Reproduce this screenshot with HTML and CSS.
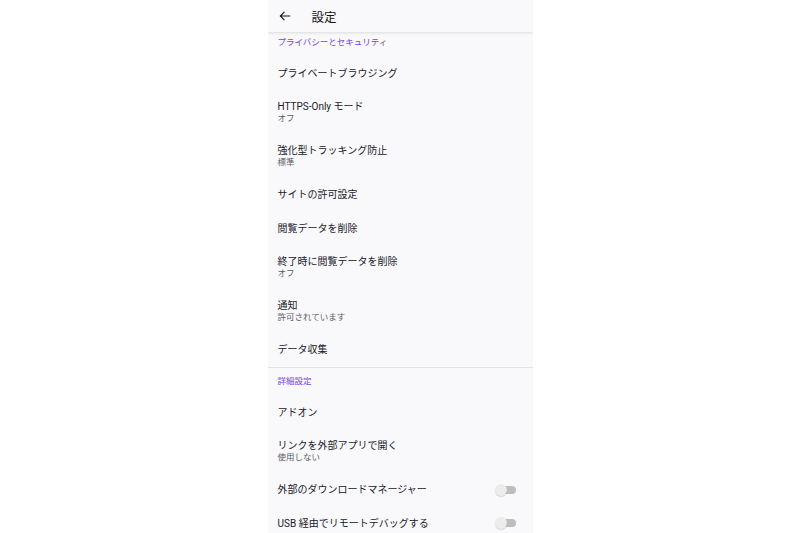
FILE: index.html
```html
<!DOCTYPE html>
<html lang="ja">
<head>
    <meta charset="UTF-8">
    <title>設定</title>
    <link rel="stylesheet" href="styles.css">
</head>
<body>
    <div class="phone">
        <div class="toolbar">
            <svg class="back" width="14" height="14" viewBox="0 0 24 24">
                <path d="M21 12H4M11 5l-7 7 7 7" fill="none" stroke="#15141a" stroke-width="2"/>
            </svg>
            <span class="toolbar-title">設定</span>
        </div>

        <div class="category first">プライバシーとセキュリティ</div>
        <div class="pref">
            <div class="pref-title">プライベートブラウジング</div>
        </div>
        <div class="pref two">
            <div class="pref-title">HTTPS-Only モード</div>
            <div class="pref-summary">オフ</div>
        </div>
        <div class="pref two">
            <div class="pref-title">強化型トラッキング防止</div>
            <div class="pref-summary">標準</div>
        </div>
        <div class="pref">
            <div class="pref-title">サイトの許可設定</div>
        </div>
        <div class="pref">
            <div class="pref-title">閲覧データを削除</div>
        </div>
        <div class="pref two">
            <div class="pref-title">終了時に閲覧データを削除</div>
            <div class="pref-summary">オフ</div>
        </div>
        <div class="pref two">
            <div class="pref-title">通知</div>
            <div class="pref-summary">許可されています</div>
        </div>
        <div class="pref">
            <div class="pref-title">データ収集</div>
        </div>

        <div class="divider"></div>

        <div class="category">詳細設定</div>
        <div class="pref">
            <div class="pref-title">アドオン</div>
        </div>
        <div class="pref two">
            <div class="pref-title">リンクを外部アプリで開く</div>
            <div class="pref-summary">使用しない</div>
        </div>
        <div class="pref switch-row">
            <div class="pref-title">外部のダウンロードマネージャー</div>
            <span class="switch"></span>
        </div>
        <div class="pref switch-row">
            <div class="pref-title">USB 経由でリモートデバッグする</div>
            <span class="switch"></span>
        </div>
    </div>
</body>
</html>
```

FILE: styles.css
```css
body {
    margin: 0;
    background: #fff;
    font-family: Roboto, "Noto Sans CJK JP", sans-serif;
    color: #15141a;
}

.phone {
    width: 265px;
    height: 533px;
    margin: 0 auto;
    background: #f9f9fb;
    overflow: hidden;
}

.toolbar {
    position: relative;
    display: flex;
    align-items: center;
    height: 32px;
    background: #f9f9fb;
    box-shadow: 0 1px 3px rgba(0, 0, 0, 0.12);
    z-index: 1;
}

.back {
    margin-left: 10px;
}

.toolbar-title {
    margin-left: 20px;
    font-size: 12.5px;
}

.category {
    height: 28px;
    padding: 7px 10px 0;
    box-sizing: border-box;
    font-size: 8.5px;
    line-height: 12px;
    color: #7542e5;
}

.category.first {
    height: 24.5px;
    padding-top: 4px;
}

.pref {
    display: flex;
    flex-direction: column;
    justify-content: center;
    height: 33.5px;
    padding: 0 10px;
}

.pref.two {
    height: 44px;
}

.pref-title {
    font-size: 10px;
    line-height: 13px;
    color: #20202a;
}

.pref-summary {
    font-size: 8.5px;
    line-height: 11px;
    color: #5b5b66;
}

.switch-row {
    flex-direction: row;
    align-items: center;
    justify-content: space-between;
}

.switch {
    position: relative;
    width: 15px;
    height: 8px;
    margin-right: 7px;
    border-radius: 4px;
    background: #bdbdbd;
}

.switch::before {
    content: "";
    position: absolute;
    left: -6px;
    top: -2px;
    width: 12px;
    height: 12px;
    border-radius: 50%;
    background: #ececec;
    box-shadow: 0 1px 1px rgba(0, 0, 0, 0.15);
}

.divider {
    height: 1px;
    background: #e4e4e7;
}
```
